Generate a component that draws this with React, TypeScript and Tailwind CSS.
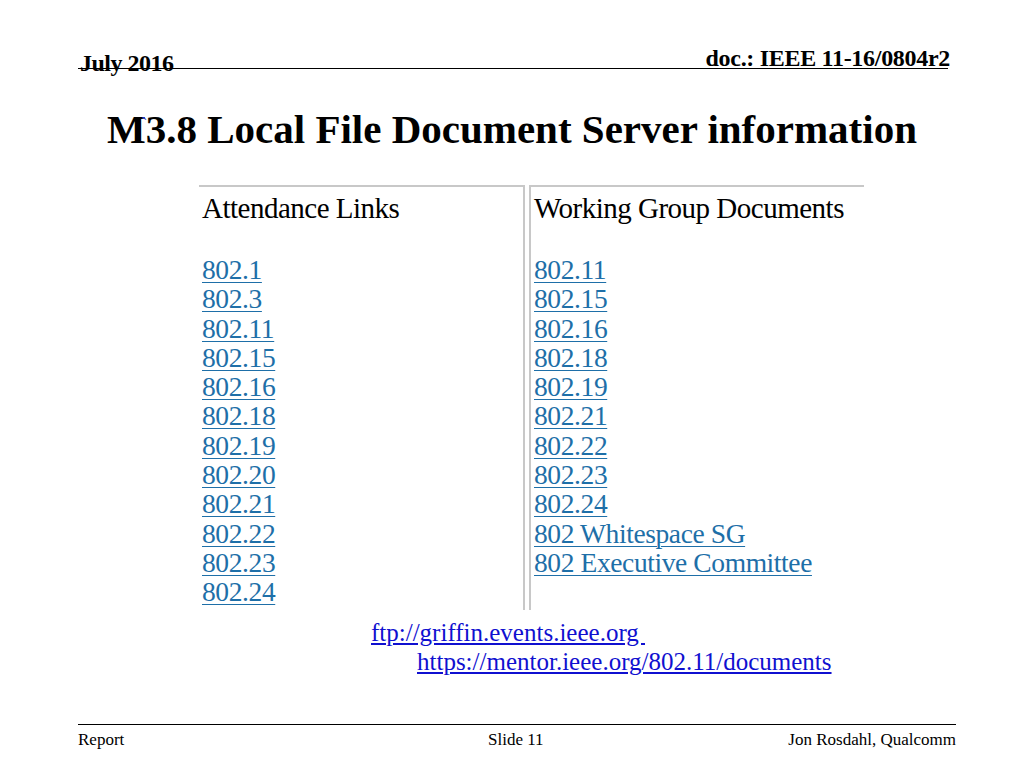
export default function App() {
  const att = ["802.1","802.3","802.11","802.15","802.16","802.18","802.19","802.20","802.21","802.22","802.23","802.24"];
  const wg = ["802.11","802.15","802.16","802.18","802.19","802.21","802.22","802.23","802.24","802 Whitespace SG","802 Executive Committee"];
  const link = "block h-[29.3px] leading-[29px] text-[#1e6fa8] underline decoration-1 underline-offset-[3px] text-[27.5px] tracking-[-0.4px]";
  return (
    <div className="relative w-[1024px] h-[768px] bg-white overflow-hidden" style={{ fontFamily: '"Liberation Serif", serif' }}>
      <div className="absolute left-[78px] top-[40px] w-[870px] h-[29px] border-b border-black">
        <span className="absolute left-[2px] top-[5px] text-[24px] font-bold tracking-[-0.5px]">July 2016</span>
        <span className="absolute right-[-2px] top-[0px] text-[24px] font-bold tracking-[-0.3px]">doc.: IEEE 11-16/0804r2</span>
      </div>
      <h1 className="absolute left-0 right-0 top-[104px] text-center text-[41px] leading-[50px] font-bold text-black">
        <span className="relative">M3.8 Local File Document Server information<span className="absolute left-[34px] top-[-6px] text-[#2030c0] text-[20px] font-normal">`</span></span>
      </h1>
      <div className="absolute left-[199px] top-[185px] flex text-black">
        <div className="w-[326px] h-[425px] border-t-2 border-r-2 border-[#c8c8c8] pl-[3px]">
          <div className="text-[29px] leading-[34px] mt-[4px] mb-[30px] tracking-[-0.5px]">Attendance Links</div>
          {att.map((a) => <span key={a} className={link}>{a}</span>)}
        </div>
        <div className="w-[335px] ml-[4px] h-[425px] border-t-2 border-l-2 border-[#c8c8c8] pl-[3px]">
          <div className="text-[29px] leading-[34px] mt-[4px] mb-[30px] tracking-[-0.5px]">Working Group Documents</div>
          {wg.map((a) => <span key={a} className={link}>{a}</span>)}
        </div>
      </div>
      <div className="absolute left-[371px] top-[618px] text-[25px] leading-[30px] text-[#1010d0] underline">ftp://griffin.events.ieee.org&nbsp;</div>
      <div className="absolute left-[417px] top-[647px] text-[25px] leading-[30px] text-[#1010d0] underline">https://mentor.ieee.org/802.11/documents</div>
      <div className="absolute left-[78px] top-[724px] w-[878px] border-t border-black" />
      <div className="absolute left-[78px] top-[727px] text-[17px]">Report</div>
      <div className="absolute left-[488px] top-[727px] text-[17px]">Slide 11</div>
      <div className="absolute right-[68px] top-[727px] text-[17px]">Jon Rosdahl, Qualcomm</div>
    </div>
  );
}
